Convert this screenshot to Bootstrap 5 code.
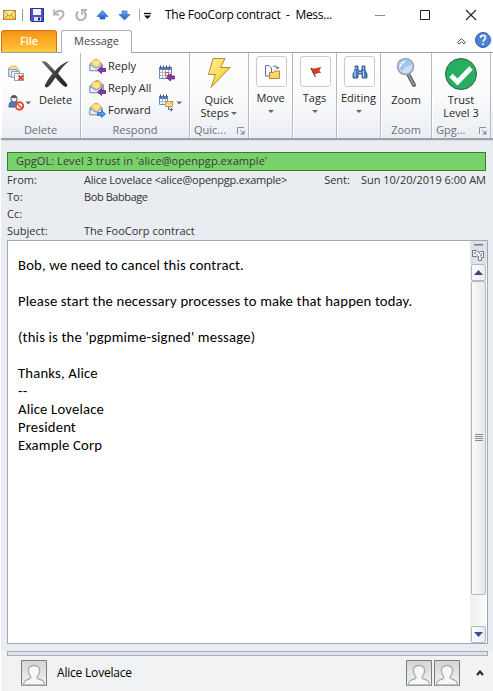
<!DOCTYPE html>
<html lang="en">
<head>
<meta charset="utf-8">
<title>The FooCorp contract - Message</title>
<link href="https://cdn.jsdelivr.net/npm/bootstrap@5.3.0/dist/css/bootstrap.min.css" rel="stylesheet">
<style>
body{width:493px;height:691px;overflow:hidden;background:#fff;font-family:"Open Sans","Noto Sans",sans-serif;font-size:11px;line-height:16px;color:#262626}
svg{display:block;flex:none}
.titlebar{height:30px}
.qat{width:154px;padding:8px 0 0 3px}
.caption{font-size:12px;line-height:30px;letter-spacing:-.27px;color:#000;width:200px;padding-left:11px;white-space:pre}
.tabs{height:23px;border-bottom:1px solid #9a9fa8;margin-left:1px}
.tab-file{width:56px;height:22px;border:1px solid #d9700c;border-bottom:0;border-radius:3px 3px 0 0;background:linear-gradient(#f08f20,#f9a01b 20%,#fdb128 60%,#ffc83c);color:#fff;font-weight:600;text-align:center;line-height:20px;letter-spacing:-.1px}
.tab-msg{width:71px;height:23px;margin-left:4px;border:1px solid #a9adb4;border-bottom:0;border-radius:3px 3px 0 0;background:#fff;text-align:center;line-height:20px;color:#444}
.ribbon{height:87px;margin-left:1px;background:linear-gradient(#fff,#fbfbfc 50%,#eaedf1);border-bottom:2px solid #9da2a9}
.group{position:relative;width:44px;border-right:1px solid #b5bbc4;box-shadow:inset 1px 0 #fff}
.g-delete{width:80px}
.g-respond{width:109px}
.g-wide{width:59px}
.g-zoom{width:51px}
.g-label{position:absolute;left:0;right:0;bottom:0;height:16px;line-height:16px;text-align:center;color:#687080}
.launch{position:absolute;right:3px;bottom:3px}
.big{line-height:13px;text-align:center}
.tile{width:31px;height:31px;border:1px solid #c9ccd3;border-radius:3px;background:#fff;display:flex;align-items:center;justify-content:center;margin:3px 5px 4px 7px}
.cmds{width:76px;padding:2px 0 0 8px}
.cmd{height:22px;line-height:22px;gap:2px}
.del-text{margin-left:5px}
.arrow{display:inline-block;border:3px solid transparent;border-top-color:#666;border-bottom:0;vertical-align:2px}
.pane{margin-left:1px;height:511px;background:#e9ecf1;padding:11px 4px 0 6px;border-top:1px solid #dadde2}
.trust{height:19px;width:479px;border:1px solid #2f8027;background:#79d16b;line-height:15px;padding-left:8px;color:#3b3b3b;letter-spacing:.05px}
.fields{height:69px;color:#333;padding-right:3px}
.field{height:17px;line-height:17px}
.f-name{width:77px}
.from{letter-spacing:-.24px}
.to{letter-spacing:-.42px}
.sent{margin-right:11px}
.message{width:481px;height:404px;border:1px solid #a0a8b5;background:#fff}
.mail{font:14.67px/18px Carlito,Lato,sans-serif;color:#000;padding:15px 0 0 10px;white-space:pre;letter-spacing:.18px}
.scroll{width:17px;background:linear-gradient(90deg,#eee,#fcfcfc)}
.corner{height:23px;background:#dde1e8;padding-top:3px}
.sbtn{height:17px;width:15px;margin-left:1px;border:1px solid #b4b8c1;border-radius:2px;background:linear-gradient(90deg,#fff,#e8eaee);display:flex;align-items:center;justify-content:center}
.thumb{height:314px;background:linear-gradient(90deg,#fafafa,#e6e7ea)}
.footer-area{height:40px;margin-left:1px;background:#f1f2f4;font-size:12px;color:#000}
.splitter{width:481px;height:5px;margin-left:6px;border:1px solid #a3abb8;background:#dfe4eb}
.p-name{line-height:34px;letter-spacing:-.2px;margin-left:10px}
.avatars{gap:2px;padding-top:4px}
.p-first{margin:4px 0 0 20px}
.p-toggle{margin:14px 9px 0 16px}
</style>
</head>
<body>
<svg width="0" height="0" class="position-absolute">
<defs>
<linearGradient id="env" x2="0" y2="1"><stop stop-color="#fff6c8"/><stop offset="1" stop-color="#f2c64c"/></linearGradient>
<linearGradient id="blue" x2="0" y2="1"><stop stop-color="#69b2f0"/><stop offset="1" stop-color="#1b55c4"/></linearGradient>
<linearGradient id="bolt" x2="1" y2="1"><stop stop-color="#fff19a"/><stop offset="1" stop-color="#f5c51f"/></linearGradient>
<linearGradient id="ava" x2="0" y2="1"><stop stop-color="#d4d4d4"/><stop offset="1" stop-color="#f2f2f2"/></linearGradient>
<linearGradient id="ink" x2="1" y2="1"><stop stop-color="#777"/><stop offset=".6" stop-color="#333"/><stop offset="1" stop-color="#222"/></linearGradient>
<symbol id="open-mail" viewBox="0 0 17 16"><path d="M1 6.500 7 1.500h1l6 5v7H1z" fill="#c3d5ec" stroke="#6f8cb8"/><path d="M3 7V4l2-2h5l2 2v4l-4 2z" fill="#ffe28a" stroke="#d9a93c" stroke-width=".8"/><path d="M1 7l6.500 4L14 7v6.500H1z" fill="#e6effa" stroke="#6f8cb8" stroke-width=".9"/></symbol>
<symbol id="purple-left" viewBox="0 0 9 8"><path d="M.5 4 4.500.5v2h4v3h-4v2z" fill="#8e3aa3" stroke="#5e1c75" stroke-width=".8"/></symbol>
<symbol id="person" viewBox="0 0 26 26"><path d="M.5.5h25v25H.5z" fill="url(#ava)" stroke="#7b7b7b"/><path d="M2.500 25c0-4 2-5 6-6 2-.6 1.500-2 .5-3.500-3-4.500-2-10 4-10s7 5.500 4 10c-1 1.500-1.500 2.900.5 3.500 4 1 6 2 6 6z" fill="#f7f7f7" stroke="#a7adb0" stroke-width="1.300"/></symbol>
<symbol id="launcher" viewBox="0 0 8 8"><path d="M.5 7V.5H7M3 3l3 3" fill="none" stroke="#8b929c"/><path d="M7.500 3v4.500H3z" fill="#8b929c"/></symbol>
</defs>
</svg>

<header class="titlebar d-flex">
  <div class="qat">
    <svg width="150" height="15" viewBox="0 0 150 15">
      <rect x=".5" y="2.500" width="12" height="9" fill="url(#env)" stroke="#b98a26"/><path d="M1 3l5.500 5L12 3M1 11l4-4M12 11 8 7" fill="none" stroke="#b98a26" stroke-width=".9"/>
      <path d="M19.500 1v12" stroke="#999"/>
      <path d="M27.500.5h13v13h-12l-1-1z" fill="#4b55c8" stroke="#2b3397"/><rect x="30" y="1" width="8" height="6" fill="#eef3ff"/><rect x="31" y="9" width="7" height="4" fill="#dfe2ee"/><rect x="35" y="9.500" width="2" height="3" fill="#222a70"/>
      <path d="M51 1.500v5h5" fill="none" stroke="#b5b5b5" stroke-width="1.800"/><path d="M51.500 6c3-4.500 9-4 9 0 0 3-2.500 4-4.500 6" fill="none" stroke="#b5b5b5" stroke-width="2"/>
      <path d="M75 3.500c-3 3-1.500 8.500 3 8.500s6.500-5 3-9" fill="none" stroke="#b5b5b5" stroke-width="2.200"/><path d="M79 7V2h5" fill="none" stroke="#b5b5b5" stroke-width="1.800"/>
      <path d="M99.500 2.500 105 8.500h-3V11h-5V8.500h-3z" fill="url(#blue)" stroke="#2a66c6" stroke-width=".7"/>
      <path d="M121.500 12 116 6.500h3V3h5v3.500h3z" fill="url(#blue)" stroke="#2a66c6" stroke-width=".7"/>
      <path d="M136.500 1v12" stroke="#aaa"/><path d="M141 5.500h7" stroke="#111" stroke-width="1.300"/><path d="M141 7.500h7L144.500 11z" fill="#111"/>
    </svg>
  </div>
  <div class="caption">The FooCorp contract  -  Mess...</div>
  <svg width="139" height="30" viewBox="354 0 139 30"><path d="M375 15.500h10" stroke="#8c8c8c"/><path d="M420.500 10.500h9v9h-9z" fill="none" stroke="#222"/><path d="M466 10l10 10M476 10 466 20" stroke="#222" stroke-width="1.100"/></svg>
</header>

<nav class="tabs d-flex">
  <div class="tab-file">File</div>
  <div class="tab-msg">Message</div>
  <svg class="ms-auto" width="40" height="22" viewBox="453 30 40 22"><path d="M457.500 42.500 461.500 38.500l4 4-1.500 1.500-2.500-2.200-2.500 2.200z" fill="#fff" stroke="#555"/><circle cx="483" cy="40" r="7.500" fill="#4b82d6" stroke="#2e5fb4"/><path d="M480.500 38c0-3.500 5-3.200 5-.3 0 1.800-2.400 1.900-2.400 4.100M483 43.200v1.700" fill="none" stroke="#fff" stroke-width="1.700"/></svg>
</nav>

<section class="ribbon d-flex">
  <div class="group g-delete">
    <div class="d-flex">
      <svg width="33" height="66" viewBox="1 53 33 66">
        <path d="M8.500 72v-4l4-2h3l3 3v3z" fill="#ffe28a" stroke="#c9a044" stroke-width=".8"/><path d="M8.500 69.500h8v7h-8z" fill="#dce7f5" stroke="#7f9cc4"/><path d="M11.500 71.500h8v6h-8z" fill="#eef3fa" stroke="#8da0bb"/><path d="M14.500 73.500h9v7h-9z" fill="#f6f9fc" stroke="#8da0bb"/><path d="M18.500 75.500l4.500 4.500M23 75.500 18.500 80" stroke="#d8432e" stroke-width="1.800"/>
        <path d="M9 107c0-5 2-6 5-6s5 2 5 6z" fill="#4f7cc8" stroke="#31599d"/><circle cx="14" cy="99" r="3.200" fill="#eee" stroke="#555"/><path d="M11 98c0-4 6-4 6 0z" fill="#555"/><circle cx="19.500" cy="106" r="3.700" fill="#fff" stroke="#dd4d31" stroke-width="2"/><path d="M17 103.500l5 5" stroke="#dd4d31" stroke-width="1.600"/><path d="M25.500 101.500h5.500l-2.700 3z" fill="#666"/>
      </svg>
      <div>
        <svg width="37" height="39" viewBox="34 53 37 39"><path d="M41.500 61.500c3-.8 4.500-.3 6 1.500l7.500 8c4-5 8.500-8.500 14.500-10-5 3.500-8.500 7.500-11.500 12.500l9 10.500c.8 1.500 0 3-1.500 3-4-2-7-6-10-9.500-3 4-5 8-8.500 10-2-.1-2.600-1.500-2-2.500 2-4 4.500-8 7.500-11.500z" fill="url(#ink)"/></svg>
        <div class="del-text">Delete</div>
      </div>
    </div>
    <div class="g-label">Delete</div>
  </div>
  <div class="group g-respond">
    <div class="d-flex">
      <div class="cmds">
        <div class="cmd d-flex align-items-center"><svg width="17" height="16"><use href="#open-mail" width="16" height="15"/><use href="#purple-left" x="8" y="8" width="9" height="8"/></svg><span>Reply</span></div>
        <div class="cmd d-flex align-items-center"><svg width="17" height="16"><use href="#open-mail" x="2" y="-1" width="15" height="14"/><use href="#open-mail" width="16" height="15"/><use href="#purple-left" x="8" y="8" width="9" height="8"/></svg><span class="text-nowrap">Reply All</span></div>
        <div class="cmd d-flex align-items-center"><svg width="17" height="16"><use href="#open-mail" width="16" height="15"/><path d="M16.500 12 12.500 8.500v2H8.500v3h4v2z" fill="#4f95e8" stroke="#2860b5" stroke-width=".8"/></svg><span>Forward</span></div>
      </div>
      <svg width="28" height="66" viewBox="157 53 28 66">
        <path d="M159.500 67.500h12v11h-12z" fill="#fff" stroke="#6f8bbd"/><path d="M159 67h13v3h-13z" fill="#5a80c4"/><path d="M160 72.500h11M160 75.500h11M162.500 70v8M165.500 70v8M168.500 70v8" stroke="#a9bddd"/><path d="M160.500 65.500v3M163.500 65.500v3M166.500 65.500v3M169.500 65.500v3" stroke="#334f80"/><path d="M165.500 72.500h3v3h-3z" fill="#fff" stroke="#e04a24"/><use href="#purple-left" x="166" y="73.500" width="9" height="8"/>
        <path d="M159.500 96.500h8v8h-8z" fill="#fff" stroke="#6f8bbd"/><path d="M159 96h9v3h-9z" fill="#5a80c4"/><path d="M160 101.500h8M162.500 99v5M165.500 99v5" stroke="#a9bddd"/><path d="M160.500 94.500v3M163.500 94.500v3M166.500 94.500v3" stroke="#334f80"/><path d="M165.500 101.500h7v5h-7z" fill="#ffe7a0" stroke="#c9962f"/><path d="M166 102l3 2.500 3-2.500" fill="none" stroke="#c9962f" stroke-width=".8"/><path d="M168.500 107v2.500h4M170.500 107.500l2 2-2 2" fill="none" stroke="#3d69ae"/><path d="M176.500 101.500h5.500l-2.700 3z" fill="#666"/>
      </svg>
    </div>
    <div class="g-label">Respond</div>
  </div>
  <div class="group g-wide">
    <svg class="mx-auto" width="30" height="40" viewBox="204 53 30 40"><path d="M213 58.500h12l-4.500 9h9.500L211 87.500l4.500-13h-7z" fill="url(#bolt)" stroke="#bd8b2c"/></svg>
    <div class="big">Quick<br>Steps <span class="arrow"></span></div>
    <div class="g-label text-start ps-1">Quic...</div><svg class="launch" width="8" height="8"><use href="#launcher"/></svg>
  </div>
  <div class="group">
    <div class="tile"><svg width="16" height="16" viewBox="0 0 16 16"><path d="M1.500 1.500H5L7.500 4v8h-6z" fill="#fff" stroke="#60718f"/><path d="M9 3c2-2 4-1 4.500 1.500M12 3l1.500 2L15 3" fill="none" stroke="#3d5d9c"/><path d="M5.500 8.500h4l1-1.500h5v7.500h-10z" fill="#fbd56d" stroke="#b98928"/></svg></div>
    <div class="big">Move<br><span class="arrow"></span></div>
  </div>
  <div class="group">
    <div class="tile"><svg width="16" height="16" viewBox="0 0 16 16"><path d="M3 4l4.500 9" stroke="#555" stroke-width="1.200"/><path d="M3 4c2.500 2 5 .5 9.500-.5l-1.500 3 1.500 2c-3-.4-4.500 1.500-7 1z" fill="#dd3d25" stroke="#a92817" stroke-width=".7"/></svg></div>
    <div class="big">Tags<br><span class="arrow"></span></div>
  </div>
  <div class="group">
    <div class="tile"><svg width="16" height="16" viewBox="0 0 16 16"><path d="M3 2h3v3l1 2h2l1-2V2h3v4l2 4v4h-5v-4H6v4H1v-4l2-4z" fill="#4a78bd" stroke="#294f8c" stroke-width=".8"/><path d="M3 7v6M11.500 7v6M4 3v2M11.500 3v2M7 8.500h2" stroke="#c9def6" stroke-width="1.100"/></svg></div>
    <div class="big">Editing<br><span class="arrow"></span></div>
  </div>
  <div class="group g-zoom">
    <svg class="mx-auto" width="30" height="40" viewBox="391 53 30 40"><path d="M408 74l6 11" stroke="#666" stroke-width="4" stroke-linecap="round"/><path d="M408 74l6 11" stroke="#bbb" stroke-width="1"/><circle cx="405.500" cy="66.500" r="8" fill="#c9e0f8" stroke="#9aa0b4" stroke-width="1.600"/><path d="M399 66c0-8 12-9 13-1-4 0-8 3-10 6-2-1-3-3-3-5z" fill="#8fb9ec" opacity=".7"/><path d="M400 67c1-4 3-5 5-5" stroke="#fff" fill="none" stroke-width="1.500"/></svg>
    <div class="big">Zoom</div>
    <div class="g-label">Zoom</div>
  </div>
  <div class="group g-wide">
    <svg class="mx-auto" width="34" height="40" viewBox="445 53 34 40"><circle cx="462" cy="74" r="15.500" fill="#27ae60" stroke="#35604a"/><path d="M452 75.500l6.500 6.500L472 68" fill="none" stroke="#fff" stroke-width="4.800"/></svg>
    <div class="big">Trust<br>Level 3</div>
    <div class="g-label text-start ps-1">Gpg...</div><svg class="launch" width="8" height="8"><use href="#launcher"/></svg>
  </div>
</section>

<main class="pane">
  <div class="trust">GpgOL: Level 3 trust in 'alice@openpgp.example'</div>
  <div class="fields">
    <div class="field d-flex"><span class="f-name">From:</span><span class="from">Alice Lovelace &lt;alice@openpgp.example&gt;</span><span class="sent ms-auto">Sent:</span><span>Sun 10/20/2019 6:00 AM</span></div>
    <div class="field d-flex"><span class="f-name">To:</span><span class="to">Bob Babbage</span></div>
    <div class="field d-flex"><span class="f-name">Cc:</span></div>
    <div class="field d-flex"><span class="f-name">Subject:</span><span>The FooCorp contract</span></div>
  </div>
  <div class="message d-flex">
    <div class="mail flex-grow-1">Bob, we need to cancel this contract.

Please start the necessary processes to make that happen today.

(this is the 'pgpmime-signed' message)

Thanks, Alice
--
Alice Lovelace
President
Example Corp</div>
    <div class="scroll d-flex flex-column">
      <div class="corner"><svg width="17" height="19" viewBox="0 0 17 19"><path d="M4 .5h9" stroke="#777" stroke-width="2"/><path d="M2.500 6.500h4l2 2 2-1h3v6h-2v3h-3v-3l-2-1h-4z" fill="#f4f4f6" stroke="#777"/><path d="M4 8l5 5M9 9l3 3M6 7.500l-2 3M12 9l-2 4" stroke="#888" stroke-width=".8"/></svg></div>
      <div class="sbtn"><svg width="9" height="5"><path d="M0 5 4.500 0 9 5z" fill="#3c4a72"/></svg></div>
      <div class="sbtn thumb"><svg width="8" height="8"><path d="M0 .5h8M0 2.500h8M0 4.500h8M0 6.500h8" stroke="#8a8d94"/></svg></div>
      <div class="sbtn mt-auto"><svg width="9" height="5"><path d="M0 0 4.500 5 9 0z" fill="#3c4a9a"/></svg></div>
    </div>
  </div>
</main>
<footer class="footer-area">
  <div class="splitter"></div>
  <div class="d-flex align-items-start">
    <svg class="p-first" width="26" height="26"><use href="#person"/></svg>
    <span class="p-name">Alice Lovelace</span>
    <div class="avatars d-flex ms-auto"><svg width="26" height="26"><use href="#person"/></svg><svg width="26" height="26"><use href="#person"/></svg></div>
    <svg class="p-toggle" width="8" height="6"><path d="M1 5l3-3.500L7 5" fill="none" stroke="#222" stroke-width="2"/></svg>
  </div>
</footer>
<script src="https://cdn.jsdelivr.net/npm/bootstrap@5.3.0/dist/js/bootstrap.bundle.min.js"></script>
</body>
</html>
